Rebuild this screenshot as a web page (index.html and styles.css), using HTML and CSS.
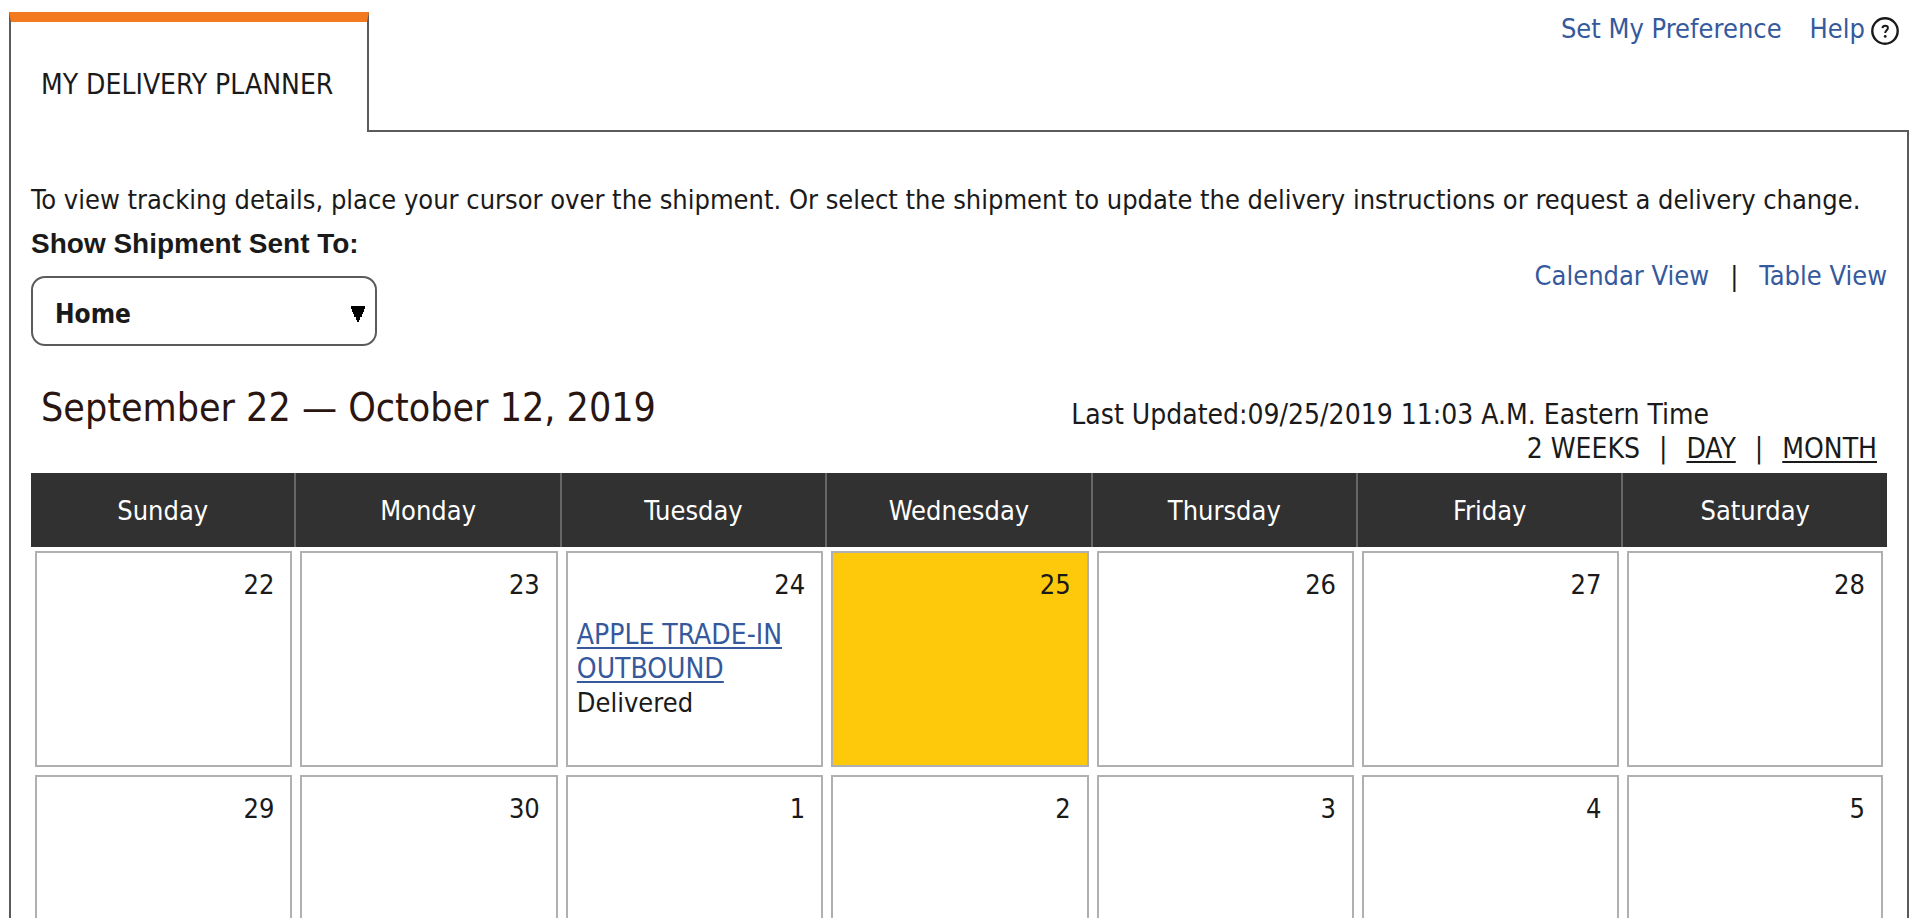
FILE: index.html
```html
<!DOCTYPE html>
<html lang="en">
<head>
<meta charset="utf-8">
<title>My Delivery Planner</title>
<link rel="stylesheet" href="styles.css">
</head>
<body>
<header class="top">
  <h1 class="tab">MY DELIVERY PLANNER</h1>
  <nav class="tools">
    <a class="link" href="#">Set My Preference</a>
    <a class="link help" href="#">Help
      <svg class="help-icon" viewBox="0 0 28 28" aria-hidden="true">
        <circle cx="14" cy="14" r="12.7" fill="none" stroke="#1a1a1a" stroke-width="2.4"/>
        <path d="M11.4 11.2c.2-1.6 1.3-2.5 2.8-2.5 1.6 0 2.7.9 2.7 2.3 0 2.2-2.7 2.3-2.7 5" fill="none" stroke="#1a1a1a" stroke-width="2"/>
        <circle cx="14.2" cy="19.4" r="1.4" fill="#1a1a1a"/>
      </svg>
    </a>
  </nav>
</header>
<main class="panel">
  <p class="intro">To view tracking details, place your cursor over the shipment. Or select the shipment to update the delivery instructions or request a delivery change.</p>
  <div class="filters">
    <div class="filter">
      <label class="filter-label" for="sent-to">Show Shipment Sent To:</label>
      <div class="picker">
        <select class="picker-select" id="sent-to"><option>Home</option></select>
        <svg class="picker-arrow" viewBox="0 0 14 16" aria-hidden="true"><path d="M0 0h14v3h-1v3h-1v2h-1v3H9v3H8v2H6v-2H5v-3H3V8H2V6H1V3H0z"/></svg>
      </div>
    </div>
    <nav class="views">
      <a class="link" href="#">Calendar View</a><span>|</span><a class="link" href="#">Table View</a>
    </nav>
  </div>
  <div class="heading">
    <h2 class="range">September 22 — October 12, 2019</h2>
    <div class="status">
      <p class="updated">Last Updated:09/25/2019 11:03 A.M. Eastern Time</p>
      <nav class="spans"><span>2 WEEKS</span><span>|</span><a class="span-link" href="#">DAY</a><span>|</span><a class="span-link" href="#">MONTH</a></nav>
    </div>
  </div>
  <table class="calendar">
    <thead>
      <tr><th>Sunday</th><th>Monday</th><th>Tuesday</th><th>Wednesday</th><th>Thursday</th><th>Friday</th><th>Saturday</th></tr>
    </thead>
    <tbody>
      <tr>
        <td><div class="day"><span class="date">22</span></div></td>
        <td><div class="day"><span class="date">23</span></div></td>
        <td><div class="day"><span class="date">24</span>
          <div class="event"><a class="event-link" href="#">APPLE TRADE-IN OUTBOUND</a><br>Delivered</div></div></td>
        <td><div class="day today"><span class="date">25</span></div></td>
        <td><div class="day"><span class="date">26</span></div></td>
        <td><div class="day"><span class="date">27</span></div></td>
        <td><div class="day"><span class="date">28</span></div></td>
      </tr>
      <tr>
        <td><div class="day"><span class="date">29</span></div></td>
        <td><div class="day"><span class="date">30</span></div></td>
        <td><div class="day"><span class="date">1</span></div></td>
        <td><div class="day"><span class="date">2</span></div></td>
        <td><div class="day"><span class="date">3</span></div></td>
        <td><div class="day"><span class="date">4</span></div></td>
        <td><div class="day"><span class="date">5</span></div></td>
      </tr>
    </tbody>
  </table>
</main>
</body>
</html>
```
FILE: styles.css
```css
* { box-sizing: border-box; }

html { scrollbar-width: none; }

body {
  margin: 0;
  padding: 12px 9px 0;
  background: #fff;
  color: #1a1a1a;
  font: 27px/34px "DejaVu Sans Condensed", "Noto Sans", sans-serif;
}

h1, h2, p { margin: 0; font-weight: 400; }

.link { color: #35599c; text-decoration: none; }

.top { display: flex; }

.tab {
  min-width: 360px;
  padding: 46px 28px 30px 30px;
  border: 2px solid #5b5b5d;
  border-top: 10px solid #f37a1f;
  border-bottom: 0;
  font-size: 28px;
}

.tools {
  flex: 1;
  display: flex;
  justify-content: flex-end;
  align-items: flex-start;
  gap: 28px;
  padding-right: 10px;
  border-bottom: 2px solid #5b5b5d;
}

.help { display: flex; align-items: center; gap: 6px; }
.help-icon { width: 28px; height: 28px; margin-top: 4px; }

.panel {
  padding: 51px 20px 0;
  border: 2px solid #5b5b5d;
  border-top: 0;
  border-bottom: 0;
}

.intro { white-space: nowrap; }

.filters { display: flex; justify-content: space-between; }

.filter-label {
  display: block;
  padding-top: 10px;
  font: bold 28px/34px "Liberation Sans", Arial, sans-serif;
}

.picker { position: relative; width: 346px; margin-top: 15px; }

.picker-select {
  appearance: none;
  display: block;
  width: 100%;
  height: 70px;
  padding: 6px 40px 0 22px;
  border: 2px solid #5b5b5d;
  border-radius: 14px;
  background: #fff;
  color: #1a1a1a;
  font: bold 26px/34px "DejaVu Sans Condensed", "Noto Sans", sans-serif;
}

.picker-arrow {
  position: absolute;
  top: 30px;
  right: 12px;
  width: 14px;
  height: 16px;
  pointer-events: none;
}

.views { display: flex; gap: 21px; padding-top: 42px; }

.heading {
  display: flex;
  justify-content: space-between;
  padding: 38px 10px 7px;
}

.range { color: #2a1510; font-size: 39px; line-height: 48px; }

.status { padding-top: 14px; font-size: 28px; }
.updated { margin-right: 168px; }
.spans { display: flex; justify-content: flex-end; gap: 19px; }

.span-link {
  color: inherit;
  text-decoration: underline 2px;
  text-underline-offset: 3px;
}

.calendar { width: 100%; table-layout: fixed; border-spacing: 0; }

.calendar th {
  width: 14.3%;
  height: 74px;
  padding: 2px 0 0;
  border-right: 2px solid #666;
  background: #313131;
  color: #fff;
  font-weight: 400;
}

.calendar th:last-child { width: auto; border-right: 0; }
.calendar td { padding: 4px; }

.day {
  height: 216px;
  padding: 15px 16px 0 9px;
  border: 2px solid #b0b0b0;
}

.today { background: #ffc90b; }
.date { display: block; text-align: right; }
.event { padding-top: 16px; }

.event-link {
  color: #35599c;
  font-size: 28px;
  text-decoration: underline 2px;
  text-underline-offset: 3px;
}
```
